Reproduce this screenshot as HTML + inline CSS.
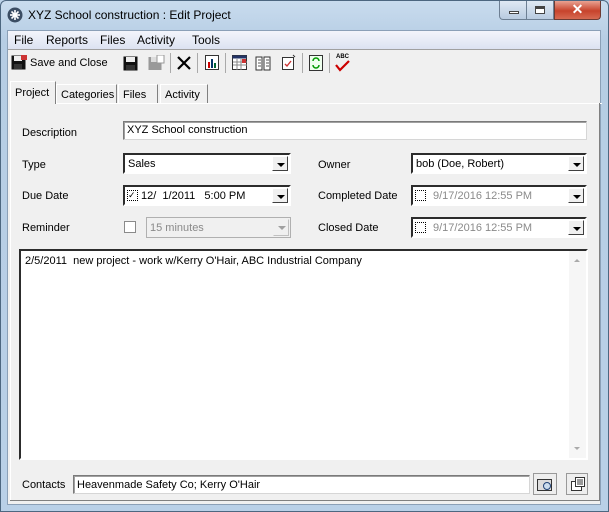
<!DOCTYPE html>
<html><head><style>
*{box-sizing:border-box;margin:0;padding:0}
body{width:609px;height:512px;overflow:hidden;font-family:"Liberation Sans",Arial,sans-serif;font-size:11px;color:#000;position:relative;background:#bcd3e9}
.a{position:absolute}
#frame{left:0;top:0;width:609px;height:512px;background:linear-gradient(#c9dcee,#b6cde4 40px,#b9d0e7);border:1px solid #4d6780;border-radius:6px 6px 0 0}
#client{left:7px;top:30px;width:594px;height:475px;background:#f0f0f0;border:1px solid #8ba0b7}
.lbl{font-size:11px}
.box{background:#fff;border:1px solid #7a7a7a;border-right-color:#d6d6d6;border-bottom-color:#d6d6d6;box-shadow:inset 1px 1px 0 #a0a0a0}
.cb{background:#fff;border:2px inset #d4d0c8;border-color:#808080 #fff #fff #808080}
.dd{position:absolute;right:1px;top:1px;width:16px;bottom:1px;background:#f0f0f0;border:1px solid;border-color:#fff #404040 #404040 #fff}
.dd:after{content:"";position:absolute;left:4px;top:6px;border:4px solid transparent;border-top:4px solid #000;border-bottom:0}
.dd.g:after{border-top-color:#a0a0a0}
.t{position:absolute;left:3px;top:3px;font-size:11px}
.tab{position:absolute;top:84px;height:19px;border:1px solid #fff;border-right-color:#808080;border-bottom:none;padding:4px 4px 0;font-size:11px;background:#f0f0f0}
</style></head><body>
<div id="frame" class="a"></div>
<svg class="a" style="left:7px;top:7px" width="16" height="16"><circle cx="8" cy="8" r="7.5" fill="#3b4d63"/><g stroke="#fff" stroke-width="1.6"><line x1="8" y1="3" x2="8" y2="13"/><line x1="3" y1="8" x2="13" y2="8"/><line x1="4.5" y1="4.5" x2="11.5" y2="11.5"/><line x1="11.5" y1="4.5" x2="4.5" y2="11.5"/></g></svg>
<div class="a" style="left:28px;top:8px;font-size:12px">XYZ School construction : Edit Project</div>
<div class="a" style="left:499px;top:1px;width:28px;height:19px;border:1px solid #6d7f93;border-top:none;border-radius:0 0 0 4px;background:linear-gradient(#dfe9f4,#b9cbe0)"><div class="a" style="left:9px;top:10px;width:10px;height:3px;background:#fff;border:1px solid #444"></div></div>
<div class="a" style="left:527px;top:1px;width:27px;height:19px;border:1px solid #6d7f93;border-top:none;border-left:none;background:linear-gradient(#dfe9f4,#b9cbe0)"><div class="a" style="left:8px;top:5px;width:10px;height:8px;border:1px solid #444;background:#fff;box-shadow:inset 0 2px 0 #444"></div></div>
<div class="a" style="left:554px;top:1px;width:47px;height:19px;border:1px solid #6d3b33;border-top:none;border-radius:0 0 4px 0;background:linear-gradient(#e9a292,#c7432c 55%,#d66a52);color:#fff;font-weight:bold;font-size:14px;text-align:center;line-height:17px">✕</div>
<div id="client" class="a"></div>
<div class="a" style="left:8px;top:31px;width:592px;height:19px;background:linear-gradient(#f3f5fb,#dce2f1);border-bottom:1px solid #a0a0a0"></div>
<div class="a" style="left:14px;top:33px;font-size:12px">File</div>
<div class="a" style="left:46px;top:33px;font-size:12px">Reports</div>
<div class="a" style="left:100px;top:33px;font-size:12px">Files</div>
<div class="a" style="left:137px;top:33px;font-size:12px">Activity</div>
<div class="a" style="left:192px;top:33px;font-size:12px">Tools</div>
<svg class="a" style="left:11px;top:55px" width="16" height="16"><rect x="0.5" y="0.5" width="14" height="14" fill="#111"/><rect x="3" y="1" width="8" height="5" fill="#eee"/><rect x="3" y="9" width="8" height="5" fill="#333"/><rect x="10" y="0" width="6" height="5" fill="#c33"/></svg>
<div class="a" style="left:30px;top:57px">Save and Close</div>
<svg class="a" style="left:123px;top:56px" width="15" height="15"><rect x="0.5" y="0.5" width="14" height="14" fill="#111"/><rect x="3" y="1" width="9" height="5" fill="#eee"/><rect x="3" y="9" width="9" height="5" fill="#333"/></svg>
<svg class="a" style="left:148px;top:55px" width="17" height="16"><rect x="0.5" y="2" width="13" height="13" fill="#999"/><rect x="3" y="2" width="8" height="5" fill="#ddd"/><rect x="9" y="0" width="7" height="8" fill="#fff" stroke="#999"/></svg>
<div class="a" style="left:170px;top:53px;width:1px;height:20px;background:#aaa"></div>
<svg class="a" style="left:177px;top:56px" width="14" height="14"><path d="M1 1L13 13M13 1L1 13" stroke="#000" stroke-width="2.2"/></svg>
<div class="a" style="left:197px;top:53px;width:1px;height:20px;background:#aaa"></div>
<svg class="a" style="left:205px;top:55px" width="15" height="16"><rect x="0.5" y="0.5" width="13" height="14" fill="#fff" stroke="#333"/><rect x="3" y="7" width="2" height="6" fill="#c00"/><rect x="6" y="4" width="2" height="9" fill="#036"/><rect x="9" y="8" width="2" height="5" fill="#063"/></svg>
<div class="a" style="left:225px;top:53px;width:1px;height:20px;background:#aaa"></div>
<svg class="a" style="left:232px;top:55px" width="16" height="16"><rect x="0.5" y="0.5" width="14" height="14" fill="#fff" stroke="#333"/><rect x="0.5" y="0.5" width="14" height="3" fill="#236"/><path d="M1 7H15M1 10H15M5 4V15M9 4V15" stroke="#888"/><rect x="10" y="4" width="4" height="4" fill="#c33"/></svg>
<svg class="a" style="left:255px;top:55px" width="17" height="16"><path d="M1 2h6v13H1zM9 2h6v13H9z" fill="#fff" stroke="#333"/><path d="M3 5h3M3 8h3M3 11h3M11 5h3M11 8h3M11 11h3" stroke="#555"/></svg>
<svg class="a" style="left:281px;top:54px" width="16" height="17"><rect x="1.5" y="3.5" width="11" height="12" fill="#fff" stroke="#333"/><path d="M4 10l2 2 4-5" stroke="#c33" fill="none" stroke-width="1.4"/><path d="M12 1l2 2" stroke="#333"/></svg>
<div class="a" style="left:302px;top:53px;width:1px;height:20px;background:#aaa"></div>
<svg class="a" style="left:309px;top:55px" width="15" height="17"><rect x="0.5" y="0.5" width="13" height="15" fill="#efe" stroke="#333"/><path d="M4 6a3 3 0 0 1 6 0M10 10a3 3 0 0 1-6 0" stroke="#090" fill="none" stroke-width="1.5"/></svg>
<div class="a" style="left:329px;top:53px;width:1px;height:20px;background:#aaa"></div>
<div class="a" style="left:336px;top:54px;font-size:6px;font-weight:bold">ABC</div>
<svg class="a" style="left:335px;top:60px" width="16" height="12"><path d="M1 5l4 5 9-9" stroke="#c00" fill="none" stroke-width="2.2"/></svg>
<div class="a" style="left:18px;top:103px;width:584px;height:1px;background:#fff"></div>
<div class="tab" style="left:10px;top:81px;height:23px;padding-top:5px;z-index:2;width:46px">Project</div>
<div class="tab" style="left:56px;width:61px">Categories</div>
<div class="tab" style="left:118px;width:40px">Files</div>
<div class="tab" style="left:160px;width:48px">Activity</div>
<div class="a" style="left:10px;top:103px;width:1px;height:398px;background:#fff"></div>
<div class="a" style="left:599px;top:103px;width:1px;height:398px;background:#808080"></div>
<div class="a" style="left:10px;top:500px;width:590px;height:1px;background:#808080"></div>
<div class="a lbl" style="left:22px;top:127px">Description</div>
<div class="a box" style="left:123px;top:121px;width:464px;height:19px"><span class="t" style="top:2px">XYZ School construction</span></div>
<div class="a lbl" style="left:22px;top:159px">Type</div>
<div class="a cb" style="left:123px;top:153px;width:168px;height:21px"><span class="t">Sales</span><div class="dd"></div></div>
<div class="a lbl" style="left:318px;top:159px">Owner</div>
<div class="a cb" style="left:411px;top:153px;width:176px;height:21px"><span class="t">bob (Doe, Robert)</span><div class="dd"></div></div>
<div class="a lbl" style="left:22px;top:190px">Due Date</div>
<div class="a cb" style="left:123px;top:185px;width:168px;height:21px"><div class="a" style="left:2px;top:3px;width:11px;height:11px;border:1px dotted #000;font-size:9px;line-height:9px">✓</div><span class="t" style="left:16px">12/&nbsp; 1/2011&nbsp;&nbsp; 5:00 PM</span><div class="dd"></div></div>
<div class="a lbl" style="left:318px;top:190px">Completed Date</div>
<div class="a cb" style="left:411px;top:185px;width:176px;height:21px"><div class="a" style="left:2px;top:3px;width:11px;height:11px;border:1px dotted #000"></div><span class="t" style="left:20px;color:#8a8a8a">9/17/2016 12:55 PM</span><div class="dd"></div></div>
<div class="a lbl" style="left:22px;top:222px">Reminder</div>
<div class="a" style="left:124px;top:221px;width:12px;height:12px;border:1px solid #8a8a8a;background:#fff"></div>
<div class="a" style="left:146px;top:217px;width:145px;height:21px;border:1px solid #b0b0b0;background:#f0f0f0"><span class="t" style="color:#8a8a8a;top:4px">15 minutes</span><div class="dd g" style="border-color:#f0f0f0 #c0c0c0 #c0c0c0 #f0f0f0"></div></div>
<div class="a lbl" style="left:318px;top:222px">Closed Date</div>
<div class="a cb" style="left:411px;top:217px;width:176px;height:21px"><div class="a" style="left:2px;top:3px;width:11px;height:11px;border:1px dotted #000"></div><span class="t" style="left:20px;color:#8a8a8a">9/17/2016 12:55 PM</span><div class="dd"></div></div>
<div class="a cb" style="left:19px;top:249px;width:569px;height:211px"><span class="t" style="left:4px;top:4px">2/5/2011&nbsp; new project - work w/Kerry O'Hair, ABC Industrial Company</span>
<div class="a" style="right:0;top:0;width:17px;bottom:0;background:#f6f6f6"><div class="a" style="left:5px;top:8px;border:3px solid transparent;border-bottom:3px solid #aaa;border-top:0"></div><div class="a" style="left:5px;bottom:8px;border:3px solid transparent;border-top:3px solid #aaa;border-bottom:0"></div></div></div>
<div class="a lbl" style="left:22px;top:479px">Contacts</div>
<div class="a box" style="left:73px;top:475px;width:457px;height:19px"><span class="t" style="top:3px">Heavenmade Safety Co; Kerry O'Hair</span></div>
<div class="a" style="left:533px;top:473px;width:24px;height:22px;border:1px solid #999;background:#eee"><svg class="a" style="left:3px;top:3px" width="17" height="15"><rect x="0.5" y="2.5" width="14" height="11" fill="#ddd" stroke="#333"/><circle cx="10" cy="9" r="3.5" fill="#cde" stroke="#247"/></svg></div>
<div class="a" style="left:566px;top:473px;width:22px;height:22px;border:1px solid #999;background:#eee"><svg class="a" style="left:3px;top:2px" width="16" height="16"><rect x="1.5" y="5.5" width="10" height="9" fill="#fff" stroke="#333"/><rect x="5.5" y="1.5" width="9" height="9" fill="#fff" stroke="#333"/><path d="M7 4h6M7 6h6M7 8h6" stroke="#333"/></svg></div>
</body></html>
